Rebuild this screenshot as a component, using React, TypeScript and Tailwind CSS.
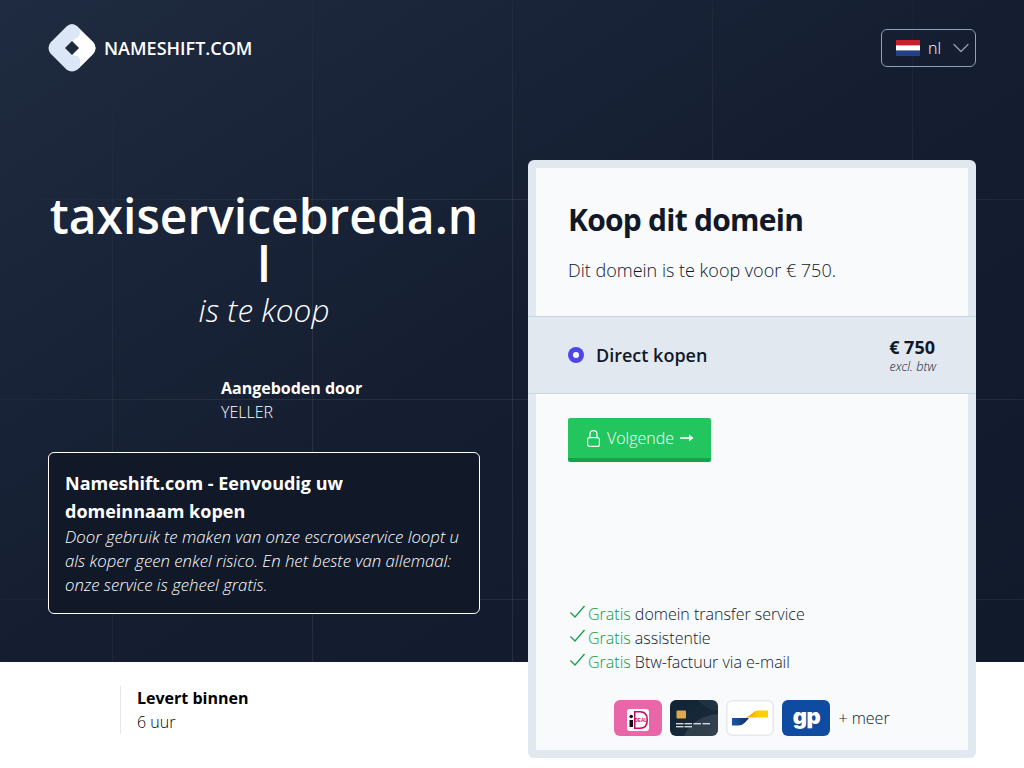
import { ChevronDown } from "lucide-react";

function Logo() {
  return (
    <svg width="48" height="48" viewBox="0 0 48 48" className="shrink-0">
      <path d="M24 0 Q27 0 29.5 2.5 L45.5 18.5 Q49.5 24 45.5 29.5 L29.5 45.5 Q24 49.5 18.5 45.5 L2.5 29.5 Q-1.5 24 2.5 18.5 L18.5 2.5 Q21 0 24 0Z" fill="#dbe7f6" />
      <path d="M27 1 L45.5 18.5 Q49.5 24 45.5 29.5 L30 45 Q35 38 30 32 L24 31 L31 24 L24 17 L30 13 Q35 7 27 1Z" fill="#ffffff" />
      <path d="M24 17 L31 24 L24 31 L17 24Z" fill="#1e293b" />
    </svg>
  );
}

function Flag() {
  return (
    <svg width="24" height="16" viewBox="0 0 24 16" className="shrink-0">
      <rect width="24" height="5.33" fill="#c8202b" />
      <rect y="5.33" width="24" height="5.33" fill="#ffffff" />
      <rect y="10.66" width="24" height="5.34" fill="#22408c" />
    </svg>
  );
}

function Check() {
  return (
    <svg width="16" height="16" viewBox="0 0 16 16" fill="none" className="mb-[5px] ml-[2px] shrink-0">
      <path d="M0.5 8.5 L5 13 L14.5 2" stroke="#16a34a" strokeWidth="1.3" />
    </svg>
  );
}

function Benefit({ text }: { text: string }) {
  return (
    <div className="flex h-6 items-center gap-[2px]">
      <Check />
      <p>
        <span className="text-[#0f9a42]">Gratis</span> {text}
      </p>
    </div>
  );
}

function Ideal() {
  return (
    <svg width="48" height="36" viewBox="0 0 48 36" className="rounded-md">
      <rect width="48" height="36" fill="#e966a8" />
      <rect x="13" y="9" width="22" height="22" rx="3" fill="#fff" />
      <path d="M20 11 H26 Q34 11 34 20 Q34 29 26 29 H20Z" fill="#cc0066" />
      <path d="M21.5 12.5 H26 Q32.5 12.5 32.5 20 Q32.5 27.5 26 27.5 H21.5Z" fill="#fff" />
      <rect x="15.5" y="20" width="3.5" height="7" fill="#111" />
      <circle cx="17.2" cy="16.5" r="1.8" fill="#111" />
      <text x="20.5" y="22" fontSize="4.6" fontWeight="700" fill="#cc0066" fontFamily="Liberation Sans">DEAL</text>
    </svg>
  );
}

function CreditCard() {
  return (
    <svg width="48" height="36" viewBox="0 0 48 36" className="rounded-md">
      <defs>
        <linearGradient id="cc" x1="0" y1="0" x2="1" y2="1">
          <stop offset="0" stopColor="#0f2436" />
          <stop offset="1" stopColor="#1d2c39" />
        </linearGradient>
      </defs>
      <rect width="48" height="36" fill="url(#cc)" />
      <path d="M14 36 Q24 16 48 14 V36Z" fill="#fff" opacity="0.1" />
      <path d="M28 0 Q36 10 48 10 V0Z" fill="#fff" opacity="0.05" />
      <rect x="6.5" y="10.5" width="9.5" height="8" rx="1" fill="#e0a84e" />
      <rect x="6" y="23" width="7.5" height="1.4" fill="#d5d9dc" />
      <rect x="14.5" y="23" width="7.5" height="1.4" fill="#d5d9dc" />
      <rect x="23.5" y="23" width="7.5" height="1.4" fill="#d5d9dc" />
      <rect x="32.5" y="23" width="7.5" height="1.4" fill="#d5d9dc" />
      <rect x="6" y="26" width="7.5" height="1.4" fill="#d5d9dc" />
      <rect x="14.5" y="26" width="7.5" height="1.4" fill="#d5d9dc" />
    </svg>
  );
}

function Bancontact() {
  return (
    <svg width="48" height="36" viewBox="0 0 48 36" className="rounded-md">
      <defs>
        <linearGradient id="bcBlue" x1="0" y1="0" x2="1" y2="0">
          <stop offset="0" stopColor="#1a55ad" />
          <stop offset="1" stopColor="#12305f" />
        </linearGradient>
        <linearGradient id="bcYellow" x1="0" y1="0" x2="1" y2="0">
          <stop offset="0" stopColor="#f39a00" />
          <stop offset="0.6" stopColor="#ffd000" />
        </linearGradient>
      </defs>
      <rect x="0.75" y="0.75" width="46.5" height="34.5" rx="5" fill="#fff" stroke="#e5e7eb" strokeWidth="1.5" />
      <path d="M42 10.5 H32 Q28.5 10.5 26 13.5 Q23 17 19 17.5 H42Z" fill="url(#bcYellow)" />
      <path d="M6 18 H23 Q20.5 21 18.5 23 Q16 25.5 12 25.5 H6Z" fill="url(#bcBlue)" />
    </svg>
  );
}

function GlobalPay() {
  return (
    <div className="flex h-9 w-12 items-center justify-center rounded-md bg-[#0f4ba1] pb-1 font-['Inter',sans-serif] text-[22px] font-black tracking-tight text-white">
      gp
    </div>
  );
}

export default function App() {
  return (
    <div className="min-h-screen overflow-hidden bg-white font-['Open_Sans',sans-serif]">
      <div className="relative h-[662px] bg-gradient-to-br from-[#1f2b40] via-[#151e31] to-[#111a2b]">
        <div className="absolute inset-0 bg-[linear-gradient(to_right,#ffffff14_1px,transparent_1px),linear-gradient(to_bottom,#ffffff14_1px,transparent_1px)] bg-size-[200px_200px] bg-position-[112px_-1px] [mask-image:radial-gradient(ellipse_at_60%_70%,black_40%,transparent_85%)]" />

        <div className="relative px-12">
          <header className="flex items-center justify-between pt-6">
            <div className="flex items-center gap-2">
              <Logo />
              <span className="text-lg font-semibold text-white">NAMESHIFT.COM</span>
            </div>
            <button className="flex h-[38px] w-[95px] items-center gap-2 rounded-md border border-slate-400 pl-[14px] font-light text-white">
              <Flag />
              <span className="text-base">nl</span>
              <ChevronDown className="-ml-[2px] size-7 text-slate-400" strokeWidth={1.1} />
            </button>
          </header>

          <div className="mt-[88px] flex gap-12">
            <div className="w-[432px] shrink-0">
              <div className="pt-[32px] text-center">
                <h1 className="text-5xl leading-12 font-semibold break-all text-white">taxiservicebreda.nl</h1>
                <p className="mt-1 text-[31.6px] leading-9 font-light italic text-white">is te koop</p>
              </div>
              <div className="mt-[48px] pl-[173px] text-white">
                <p className="font-bold">Aangeboden door</p>
                <p className="font-light">YELLER</p>
              </div>
              <div className="mt-[28px] rounded-md border border-white bg-[#111827] p-4 text-white">
                <p className="text-lg leading-7 font-bold">Nameshift.com - Eenvoudig uw domeinnaam kopen</p>
                <p className="text-[16.75px] leading-6 font-light italic">
                  Door gebruik te maken van onze escrowservice loopt u als koper geen enkel risico. En het beste van
                  allemaal: onze service is geheel gratis.
                </p>
              </div>
            </div>

            <div className="h-[598px] w-[448px] shrink-0 rounded-md bg-[#e2e8f0] pt-2">
              <div className="mx-2 h-[148px] bg-[#f8fafc] px-8 pt-[34px]">
                <h2 className="text-3xl font-bold tracking-tight text-[#111827]">Koop dit domein</h2>
                <p className="mt-[18px] text-lg font-light text-[#0f172a]">Dit domein is te koop voor € 750.</p>
              </div>
              <div className="flex h-[78px] items-center justify-between border-y border-[#cbd5e1] px-10">
                <div className="flex items-center gap-3">
                  <span className="flex size-4 items-center justify-center rounded-full bg-[#4f46e5]">
                    <span className="size-[6px] rounded-full bg-white" />
                  </span>
                  <span className="text-lg font-semibold text-[#111827]">Direct kopen</span>
                </div>
                <div className="text-right">
                  <p className="pr-[1px] text-lg leading-6 font-bold text-[#111827]">€ 750</p>
                  <p className="text-[12.6px] leading-4 font-light italic text-[#0f172a]">excl. btw</p>
                </div>
              </div>
              <div className="mx-2 flex h-[356px] flex-col bg-[#f8fafc] px-8 pt-6 font-light text-[#0f172a]">
                <button className="flex h-11 w-[143px] items-center rounded-xs border-b-4 border-[#16a34a] bg-[#22c55e] pl-[19px] text-white">
                  <svg width="13" height="17" viewBox="0 0 13 17" fill="none" className="mr-[7px]">
                    <rect x="0.6" y="7.6" width="11.8" height="8.8" rx="2" stroke="white" strokeWidth="1.2" />
                    <path d="M3 7.5 V4 Q3 0.6 6.5 0.6 Q10 0.6 10 4 V7.5" stroke="white" strokeWidth="1.2" />
                  </svg>
                  <span>Volgende</span>
                  <svg width="14" height="10" viewBox="0 0 14 10" fill="none" className="ml-[6px]">
                    <path d="M0 5 H11" stroke="white" strokeWidth="1.6" />
                    <path d="M9 1.5 L13.5 5 L9 8.5Z" fill="white" />
                  </svg>
                </button>
                <div className="mt-auto">
                  <Benefit text="domein transfer service" />
                  <Benefit text="assistentie" />
                  <Benefit text="Btw-factuur via e-mail" />
                  <div className="mt-[26px] mb-[14px] flex items-center justify-center gap-2">
                    <Ideal />
                    <CreditCard />
                    <Bancontact />
                    <GlobalPay />
                    <span>+ meer</span>
                  </div>
                </div>
              </div>
            </div>
          </div>
        </div>
      </div>
      <div className="pt-6 pl-[120px]">
        <div className="border-l border-gray-200 pl-4">
          <p className="font-bold text-black">Levert binnen</p>
          <p className="font-light text-black">6 uur</p>
        </div>
      </div>
    </div>
  );
}
